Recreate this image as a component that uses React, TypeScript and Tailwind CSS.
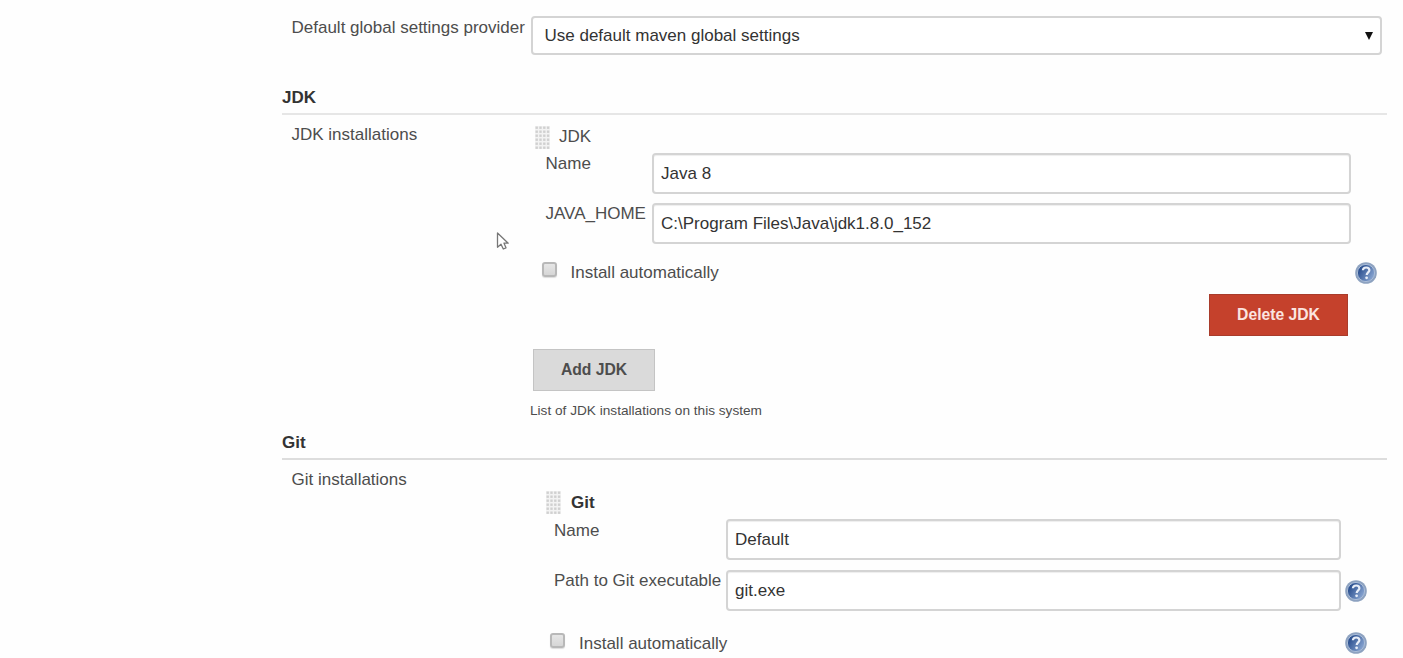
import type { ReactNode } from "react";

function HelpIcon() {
  return (
    <svg className="size-[22px] shrink-0" viewBox="0 0 22 22" aria-label="Help">
      <defs>
        <linearGradient id="help-face" x1="0" y1="0" x2="1" y2="0.6">
          <stop offset="0.15" stopColor="#24498a" />
          <stop offset="1" stopColor="#86a3d0" />
        </linearGradient>
      </defs>
      <circle cx="11" cy="11" r="10.8" fill="#8da2c0" />
      <circle cx="11" cy="11" r="8.6" fill="url(#help-face)" stroke="#a9bcd8" strokeWidth="1" />
      <path
        d="M7.9 8.3C8 6.4 9.3 5.5 11.2 5.5C13.1 5.5 14.4 6.5 14.4 8.2C14.4 10.3 11.7 10.5 11.7 13"
        fill="none"
        stroke="#e8eef8"
        strokeWidth="2.2"
      />
      <circle cx="11.6" cy="15.8" r="1.4" fill="#e8eef8" />
    </svg>
  );
}

function DragHandle() {
  const columns = [0, 1, 2, 3];
  const rows = [0, 1, 2, 3, 4, 5];
  return (
    <svg className="h-6 w-[15px] shrink-0" viewBox="0 0 15 24" aria-hidden="true">
      <rect width="15" height="23" fill="#f3f3f3" />
      {rows.map((row) =>
        columns.map((column) => (
          <rect
            key={`${row}-${column}`}
            x={0.5 + column * 3.8}
            y={0.5 + row * 4}
            width="2.4"
            height="2.4"
            fill="#d0d0d0"
          />
        )),
      )}
    </svg>
  );
}

function SectionHeader({ children }: { children: ReactNode }) {
  return <h2 className="h-5 font-bold text-[#333]">{children}</h2>;
}

function TextField({ label, value }: { label: string; value: string }) {
  return (
    <input
      aria-label={label}
      defaultValue={value}
      className="h-[41px] min-w-0 flex-1 rounded-[4px] border-2 border-[#d4d4d4] bg-white px-[7px] text-[#333] shadow-[inset_0_1px_1px_#eeeeee] outline-none"
    />
  );
}

function Checkbox() {
  return (
    <input
      type="checkbox"
      aria-label="Install automatically"
      className="size-[15px] shrink-0 appearance-none rounded-[3px] border-2 border-[#b8b8b8] bg-linear-to-b from-[#e6e6e6] to-[#d6d6d6] shadow-[0_1px_1px_#dddddd]"
    />
  );
}

export default function App() {
  return (
    <main className="relative h-[658px] w-[1403px] overflow-hidden bg-[#fefefe] pl-[282px] font-['Liberation_Sans',Arial,sans-serif] text-[17px] leading-5 whitespace-nowrap text-[#4d4d4d]">
      <div className="flex pt-4 pl-[9.5px]">
        <span className="w-[239.5px] pt-0.5">Default global settings provider</span>
        <div className="flex h-[39px] w-[851px] items-center justify-between rounded-[4px] border-2 border-[#d4d4d4] bg-white pt-px pr-[7px] pl-[11.5px] text-[#333]">
          <span>Use default maven global settings</span>
          <svg className="h-2 w-2" viewBox="0 0 8 8">
            <path d="M0 0H8L4 8Z" fill="#111" />
          </svg>
        </div>
      </div>

      <section className="mt-[33px] w-[1105px]">
        <SectionHeader>JDK</SectionHeader>
        <div className="mt-[5px] h-0.5 bg-[#e6e6e6]" />
        <div className="flex pl-[9.5px]">
          <span className="w-[238.5px] pt-2.5">JDK installations</span>
          <div className="flex flex-1 flex-col">
            <div className="flex pt-[11px] pl-[5px]">
              <DragHandle />
              <span className="ml-[9px] pt-px">JDK</span>
            </div>
            <div className="-mt-px flex h-[50px] pt-1 pr-9 pl-[15.5px]">
              <span className="w-[106.5px] pt-px">Name</span>
              <TextField label="Name" value="Java 8" />
            </div>
            <div className="flex h-[51px] pt-1 pr-9 pl-[15.5px]">
              <span className="w-[106.5px] pt-px">JAVA_HOME</span>
              <TextField label="JAVA_HOME" value="C:\Program Files\Java\jdk1.8.0_152" />
            </div>
            <div className="mt-3 flex h-6 pr-2.5 pl-3">
              <Checkbox />
              <span className="ml-[13.5px] flex-1 pt-px">Install automatically</span>
              <HelpIcon />
            </div>
            <button className="mt-2 mr-[39px] h-[42px] w-[139px] self-end border border-[#a93c2b] bg-[#c5412c] text-[15.7px] font-bold text-[#fbe4e0]">
              Delete JDK
            </button>
            <button className="mt-[13px] ml-[3px] h-[42px] w-[122px] border-[1.5px] border-[#c4c4c4] bg-[#dadada] text-[15.7px] font-bold text-[#4d4d4d]">
              Add JDK
            </button>
            <span className="mt-2.5 text-[13.65px]">List of JDK installations on this system</span>
          </div>
        </div>
      </section>

      <section className="mt-3 w-[1105px]">
        <SectionHeader>Git</SectionHeader>
        <div className="mt-[5px] h-0.5 bg-[#dddddd]" />
        <div className="flex pl-[9.5px]">
          <span className="w-[238.5px] pt-2.5">Git installations</span>
          <div className="flex flex-1 flex-col">
            <div className="flex pt-[31px] pl-4">
              <DragHandle />
              <span className="ml-2.5 pt-0.5 font-bold text-[#333]">Git</span>
            </div>
            <div className="flex h-[51px] pt-1 pr-[46px] pl-6">
              <span className="w-[172px] pt-0.5">Name</span>
              <TextField label="Name" value="Default" />
            </div>
            <div className="flex h-[51px] pt-1 pr-5 pl-6">
              <span className="w-[172px] pt-px">Path to Git executable</span>
              <TextField label="Path to Git executable" value="git.exe" />
              <span className="mt-2.5 ml-1">
                <HelpIcon />
              </span>
            </div>
            <div className="mt-[15px] flex h-6 pr-5 pl-5">
              <span className="flex pt-px">
                <Checkbox />
              </span>
              <span className="ml-3.5 flex-1 pt-0.5">Install automatically</span>
              <HelpIcon />
            </div>
          </div>
        </div>
      </section>

      <svg className="absolute top-[231px] left-[496px] h-5 w-3.5" viewBox="0 0 14 20">
        <path
          d="M1.5 2V16.3L5 13.2L7.3 18L10 16.8L8 12.2H12.2Z"
          fill="#fff"
          stroke="#777"
          strokeWidth="1.3"
          strokeLinejoin="round"
        />
      </svg>
    </main>
  );
}
